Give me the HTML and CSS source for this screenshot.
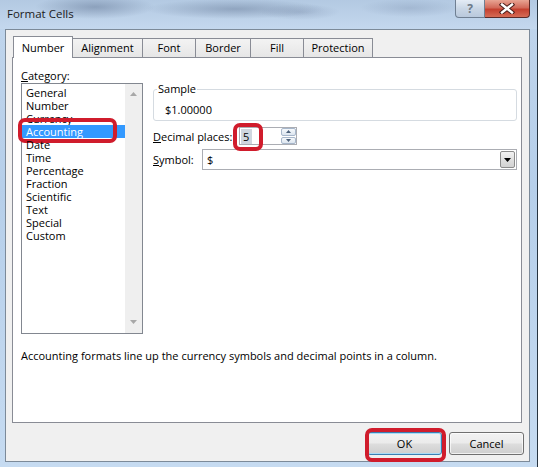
FILE: index.html
```html
<!DOCTYPE html>
<html lang="en">
<head>
  <meta charset="UTF-8">
  <meta name="viewport" content="width=device-width, initial-scale=1.0">
  <title>Format Cells</title>
  <link rel="stylesheet" href="styles.css">
</head>
<body>
  <!-- Dialog window -->
  <div class="window">
    <div class="titlebar">
      <span class="title">Format Cells</span>
      <div class="caption-buttons">
        <span class="cap-btn help">?</span>
        <span class="cap-btn close">
          <svg width="16" height="11" viewBox="0 0 16 11">
            <path d="M3 1.5 L13 9.5 M13 1.5 L3 9.5" stroke="#4a1e1a" stroke-width="4.4" stroke-linecap="square"/>
            <path d="M3 1.5 L13 9.5 M13 1.5 L3 9.5" stroke="#fff" stroke-width="2.4" stroke-linecap="square"/>
          </svg>
        </span>
      </div>
    </div>

    <div class="client">
      <!-- Tabs -->
      <div class="tabs">
        <span class="tab active" style="width:60px">Number</span>
        <span class="tab" style="width:71px">Alignment</span>
        <span class="tab" style="width:54px">Font</span>
        <span class="tab" style="width:56px">Border</span>
        <span class="tab" style="width:54px">Fill</span>
        <span class="tab" style="width:70px">Protection</span>
      </div>

      <div class="panel">
        <div class="panel-body">
          <div class="category">
            <div class="label"><u>C</u>ategory:</div>
            <div class="listbox">
              <ul class="items">
                <li>General</li>
                <li>Number</li>
                <li>Currency</li>
                <li class="selected">Accounting<span class="mark mark-item"></span></li>
                <li>Date</li>
                <li>Time</li>
                <li>Percentage</li>
                <li>Fraction</li>
                <li>Scientific</li>
                <li>Text</li>
                <li>Special</li>
                <li>Custom</li>
              </ul>
              <div class="vscroll">
                <svg width="7" height="4" viewBox="0 0 7 4"><path d="M0 4 L3.5 0 L7 4Z" fill="#a8a8a8"/></svg>
                <svg width="7" height="4" viewBox="0 0 7 4"><path d="M0 0 L3.5 4 L7 0Z" fill="#a8a8a8"/></svg>
              </div>
            </div>
          </div>

          <div class="options">
            <fieldset class="sample">
              <legend>Sample</legend>
              <div class="sample-value">$1.00000</div>
            </fieldset>

            <div class="field-row decimals">
              <label class="field-label"><u>D</u>ecimal places:</label>
              <div class="spin">
                <span class="spin-text"><span class="sel">5</span></span>
                <span class="spin-btns">
                  <span class="spin-btn"><svg width="5" height="3" viewBox="0 0 5 3"><path d="M0 3 L2.5 0 L5 3Z" fill="#4c607a"/></svg></span>
                  <span class="spin-btn"><svg width="5" height="3" viewBox="0 0 5 3"><path d="M0 0 L2.5 3 L5 0Z" fill="#4c607a"/></svg></span>
                </span>
                <span class="mark mark-spin"></span>
              </div>
            </div>

            <div class="field-row symbol">
              <label class="field-label"><u>S</u>ymbol:</label>
              <div class="combo">
                <span class="combo-text">$</span>
                <span class="combo-btn"><svg width="7" height="4" viewBox="0 0 7 4"><path d="M0 0 L3.5 4 L7 0Z" fill="#000"/></svg></span>
              </div>
            </div>
          </div>
        </div>

        <p class="description">Accounting formats line up the currency symbols and decimal points in a column.</p>
      </div>

      <div class="buttons">
        <button class="btn default">OK<span class="mark mark-ok"></span></button>
        <button class="btn">Cancel</button>
      </div>
    </div>
  </div>
</body>
</html>
```

FILE: styles.css
```css
/* Reset */
* { box-sizing: border-box; margin: 0; padding: 0; }
body { font-family: 'Open Sans', sans-serif; font-size: 11px; color: #000; background: #fff; }
u { text-decoration: underline; text-underline-offset: 1px; }

/* Window frame */
.window {
  width: 538px; height: 467px;
  display: flex; flex-direction: column;
  background: linear-gradient(#c0d5ec, #b6cfea 40%, #c6dbf1);
  border-right: 1px solid #26333f;
}
.titlebar {
  height: 29px; flex: none;
  display: flex; justify-content: space-between; align-items: flex-start;
  padding: 0 7px;
  background:
    radial-gradient(60px 12px at 95px 7px, rgba(105,125,155,0.55), transparent),
    radial-gradient(90px 10px at 235px 9px, rgba(95,115,145,0.45), transparent),
    radial-gradient(40px 8px at 300px 12px, rgba(120,140,170,0.35), transparent),
    radial-gradient(50px 9px at 410px 8px, rgba(125,145,175,0.35), transparent),
    linear-gradient(#b3c9e2, #c4d8ee);
}
.title { margin-top: 6px; line-height: 16px; font-size: 11.5px; color: #1b1b1b; }
.caption-buttons { display: flex; }
.cap-btn {
  height: 18px; display: flex; align-items: center; justify-content: center;
  border: 1px solid #6f7f92; border-top: none;
}
.help {
  width: 30px; border-radius: 0 0 0 4px;
  background: linear-gradient(#e4ecf5, #c9d6e5 50%, #b9c9dc);
  color: #6d7a88; font-size: 12px; font-weight: bold;
}
.close {
  width: 45px; border-left: none; border-radius: 0 0 4px 0;
  border-color: #5a2a28;
  background: linear-gradient(#e8a493, #d26a5a 45%, #c4402f 55%, #d56b55);
}

/* Client area */
.client {
  flex: 1; margin: 0 7px 5px 5px;
  border: 1px solid #7c8a99; background: #f0f0f0;
  padding: 6px 7px 0 6px;
  display: flex; flex-direction: column;
}

/* Tabs */
.tabs { display: flex; height: 21px; padding-left: 1px; }
.tab {
  height: 19px; margin-top: 2px; margin-left: -1px;
  border: 1px solid #898c95; border-bottom: none;
  background: linear-gradient(#f3f3f3, #e6e6e6);
  text-align: center; line-height: 18px; color: #000;
}
.tab:first-child { margin-left: 0; }
.tab.active {
  height: 22px; margin-top: 0; margin-bottom: -1px;
  background: #fff; line-height: 21px;
  position: relative; z-index: 1;
}

.panel {
  height: 366px; flex: none;
  border: 1px solid #898c95; background: #fff;
  padding: 10px 4px 0 8px;
}
.panel-body { display: flex; gap: 10px; }

/* Category list */
.category { width: 122px; }
.label { line-height: 15px; }
.listbox { height: 251px; border: 1px solid #828790; display: flex; }
.items { flex: 1; list-style: none; padding-top: 2px; }
.items li { line-height: 13px; padding-left: 4px; position: relative; }
.items li.selected { background: #3399ff; color: #fff; }
.vscroll {
  width: 17px; background: #efefef;
  display: flex; flex-direction: column; justify-content: space-between; align-items: center;
  padding: 8px 0 9px;
}

/* Options */
.options { width: 364px; padding-top: 14px; }
.sample {
  border: 1px solid #d5dbe1; border-radius: 3px;
  padding: 0 0 3px 11px;
}
.sample legend { line-height: 14px; padding: 0 1px; margin-left: -8px; }
.sample-value { line-height: 15px; padding-top: 6px; }

.field-row { display: flex; align-items: center; }
.field-label { line-height: 15px; }
.decimals { margin-top: 6px; height: 18px; }
.decimals .field-label { width: 86px; }
.symbol { margin-top: 4px; height: 21px; }
.symbol .field-label { width: 49px; }

.spin {
  width: 58px; height: 18px; position: relative;
  border: 1px solid #abadb3; background: #fff;
  display: flex; justify-content: space-between;
}
.spin-text { padding: 1px 0 0 1px; line-height: 15px; }
.sel { background: #cfd6df; padding: 0 3px 0 2px; }
.spin-btns { width: 15px; display: flex; flex-direction: column; gap: 1px; }
.spin-btn {
  flex: 1; display: flex; align-items: center; justify-content: center;
  border: 1px solid #a7b7cb; border-radius: 2px;
  background: linear-gradient(#f6f9fc, #dce5ef);
}

.combo {
  flex: 1; height: 21px;
  border: 1px solid #abadb3; background: #fff;
  display: flex; justify-content: space-between; align-items: center;
  padding-right: 1px;
}
.combo-text { padding-left: 4px; }
.combo-btn {
  width: 15px; height: 17px;
  display: flex; align-items: center; justify-content: center;
  border: 1px solid #8c8c8c; border-radius: 2px;
  background: linear-gradient(#f2f2f2, #e0e0e0 50%, #d2d2d2);
}

.description { margin-top: 14px; line-height: 15px; }

/* Dialog buttons */
.buttons { display: flex; justify-content: flex-end; gap: 7px; margin: 9px -2px 0 0; }
.btn {
  width: 75px; height: 23px; position: relative;
  font: inherit; color: #000;
  border: 1px solid #707070; border-radius: 3px;
  background: linear-gradient(#f2f2f2, #ebebeb 48%, #dddddd 52%, #cfcfcf);
  box-shadow: inset 0 0 0 1px rgba(255,255,255,0.7);
}
.btn.default { border-color: #3c7fb1; box-shadow: inset 0 0 0 1px #a9dcf7; }

/* Red highlight marks */
.mark {
  position: absolute; pointer-events: none;
  border: 4px solid #d01c2c; border-radius: 7px;
}
.mark-item { left: -4px; top: -7px; width: 99px; height: 25px; }
.mark-spin { left: -7px; top: -5px; width: 30px; height: 28px; }
.mark-ok { left: -3px; top: -5px; width: 81px; height: 34px; }
```
